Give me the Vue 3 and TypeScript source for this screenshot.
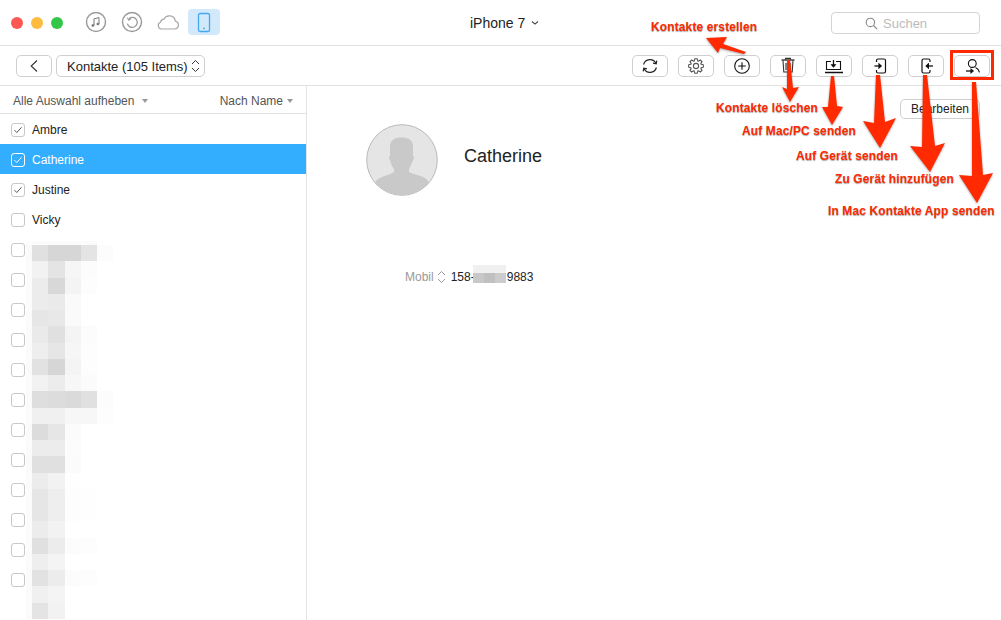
<script setup lang="ts">
const contacts = [
  { name: 'Ambre', checked: true },
  { name: 'Catherine', checked: true, selected: true },
  { name: 'Justine', checked: true },
  { name: 'Vicky', checked: false },
  ...Array.from({ length: 12 }, () => ({ name: '', checked: false })),
]

const shades: number[][] = [
  [0xfd, 0xfb, 0xfb, 0xfb, 0xfb, 0xff],
  [0xfa, 0xe0, 0xd6, 0xd6, 0xe4, 0xfc],
  [0xfb, 0xf2, 0xe4, 0xf6, 0xfc, 0xff],
  [0xfb, 0xec, 0xd8, 0xf4, 0xfd, 0xff],
  [0xfb, 0xec, 0xea, 0xfa, 0xff, 0xff],
  [0xfb, 0xe6, 0xe8, 0xfa, 0xff, 0xff],
  [0xfb, 0xea, 0xe0, 0xf4, 0xfc, 0xff],
  [0xfb, 0xee, 0xe6, 0xf6, 0xfd, 0xff],
  [0xfa, 0xe2, 0xd6, 0xf4, 0xfd, 0xff],
  [0xfb, 0xf2, 0xec, 0xf7, 0xfb, 0xff],
  [0xfa, 0xde, 0xdc, 0xda, 0xe0, 0xfc],
  [0xfb, 0xf0, 0xf0, 0xf7, 0xf7, 0xfd],
  [0xfa, 0xdc, 0xe6, 0xfb, 0xff, 0xff],
  [0xfb, 0xec, 0xec, 0xfc, 0xff, 0xff],
  [0xfa, 0xe0, 0xe0, 0xfb, 0xff, 0xff],
  [0xfb, 0xec, 0xf2, 0xfe, 0xff, 0xff],
  [0xfb, 0xe6, 0xee, 0xfd, 0xfe, 0xff],
  [0xfb, 0xe6, 0xee, 0xfd, 0xfe, 0xff],
  [0xfb, 0xec, 0xf2, 0xff, 0xff, 0xff],
  [0xfb, 0xe0, 0xec, 0xfc, 0xfd, 0xff],
  [0xfb, 0xee, 0xf4, 0xff, 0xff, 0xff],
  [0xfb, 0xe2, 0xec, 0xfc, 0xfd, 0xff],
  [0xfb, 0xf0, 0xf4, 0xff, 0xff, 0xff],
  [0xfb, 0xe4, 0xf2, 0xff, 0xff, 0xff],
]
const gray = (v: number) => `rgb(${v},${v},${v})`
const cells = shades.flat().map(gray)
const phoneCells = [0xf0, 0xf0, 0xf0, 0xc8, 0xc0, 0xcc].map(gray)

const gearPath = (() => {
  const pts: string[] = []
  const teeth = 8
  for (let i = 0; i < teeth; i++) {
    const a = (i / teeth) * Math.PI * 2
    const step = (Math.PI * 2) / teeth
    const list: [number, number][] = [
      [5.4, a - step * 0.42],
      [7.4, a - step * 0.2],
      [7.4, a + step * 0.2],
      [5.4, a + step * 0.42],
    ]
    for (const [r, t] of list) {
      pts.push(`${(11 + r * Math.cos(t)).toFixed(2)} ${(11 + r * Math.sin(t)).toFixed(2)}`)
    }
  }
  return 'M' + pts.join('L') + 'Z'
})()

const notes = [
  { cls: 'n1', text: 'Kontakte erstellen' },
  { cls: 'n2', text: 'Kontakte löschen' },
  { cls: 'n3', text: 'Auf Mac/PC senden' },
  { cls: 'n4', text: 'Auf Gerät senden' },
  { cls: 'n5', text: 'Zu Gerät hinzufügen' },
  { cls: 'n6', text: 'In Mac Kontakte App senden' },
]
const arrows = [
  '706,38 727,37 723,44 746,52 744,54 720,48 718,53',
  '787,60 790,60 793,88 799,87 790,102 782,87 787,89',
  '831,76 834,76 837,106 843,107 832,125 822,107 828,107',
  '876,75 880,75 885,122 896,118 880,148 863,121 874,123',
  '923,75 927,75 935,146 945,143 930,172 910,146 922,147',
  '972,82 976,82 983,175 993,173 977,203 959,175 972,176',
]
</script>

<template>
  <div class="window">
    <header class="titlebar">
      <div class="lights">
        <span class="light red"></span>
        <span class="light yellow"></span>
        <span class="light green"></span>
      </div>
      <nav class="nav">
        <span class="nav-item">
          <svg width="22" height="22" viewBox="0 0 22 22" fill="none" stroke="#999">
            <circle cx="11" cy="11" r="9.5" stroke-width="1.4" />
            <path d="M9 14.2V7.8l5-1.2v6.2" stroke="#777" stroke-width="1" />
            <ellipse cx="7.9" cy="14.4" rx="1.2" ry="1" fill="#777" stroke="#777" stroke-width=".6" />
            <ellipse cx="12.9" cy="13" rx="1.2" ry="1" fill="#777" stroke="#777" stroke-width=".6" />
          </svg>
        </span>
        <span class="nav-item">
          <svg width="22" height="22" viewBox="0 0 22 22" fill="none" stroke="#999">
            <circle cx="11" cy="11" r="9.5" stroke-width="1.4" />
            <path d="M8 7.6a5 5 0 1 1-1.6 5" stroke-width="1.3" />
            <path d="M6.4 6.8l1.5 2.4 2.2-1.6" stroke-width="1.2" />
          </svg>
        </span>
        <span class="nav-item">
          <svg width="24" height="18" viewBox="0 0 24 18" fill="none" stroke="#a8a8a8" stroke-width="1.2">
            <path d="M6 16h12.5a4 4 0 0 0 .8-7.9 6 6 0 0 0-11.300-2 4 4 0 0 0-3.600 3.200A3.500 3.500 0 0 0 6 16z" />
          </svg>
        </span>
        <span class="nav-tile">
          <svg width="14" height="22" viewBox="0 0 14 22" fill="none" stroke="#45a9f0" stroke-width="1.3">
            <rect x="1.5" y="2.5" width="11" height="18" rx="1.6" />
            <circle cx="7" cy="17.3" r="0.9" fill="#45a9f0" stroke="none" />
          </svg>
        </span>
      </nav>
      <div class="device">
        <span>iPhone 7</span>
        <svg width="8" height="6" viewBox="0 0 8 6" fill="none" stroke="#444" stroke-width="1.1"><path d="M1 1.5l3 2.6 3-2.6" /></svg>
      </div>
      <div class="search">
        <svg width="13" height="13" viewBox="0 0 13 13" fill="none" stroke="#888" stroke-width="1.1">
          <circle cx="5.4" cy="5.4" r="4.2" /><path d="M8.5 8.5l3.6 3.6" />
        </svg>
        <span>Suchen</span>
      </div>
    </header>

    <div class="toolbar">
      <button class="btn back">
        <svg width="10" height="14" viewBox="0 0 10 14" fill="none" stroke="#333" stroke-width="1.1"><path d="M8 1.5L2.2 7 8 12.5" /></svg>
      </button>
      <button class="btn picker">
        <span>Kontakte (105 Items)</span>
        <svg width="9" height="14" viewBox="0 0 9 14" fill="none" stroke="#333" stroke-width="1"><path d="M1 5l3.5-3.500L8 5M1 9l3.500 3.500L8 9" /></svg>
      </button>
      <div class="actions">
        <button class="btn tool">
          <svg width="22" height="22" viewBox="0 0 22 22" fill="none" stroke="#222" stroke-width="1.2">
            <path d="M4.6 9.5A6.6 6.6 0 0 1 17 8.5" /><path d="M17.4 12.5A6.6 6.6 0 0 1 5 13.5" />
            <path d="M17.8 5.6l-.6 3.3-3.2-.7" /><path d="M4.2 16.4l.6-3.3 3.2.7" />
          </svg>
        </button>
        <button class="btn tool">
          <svg width="22" height="22" viewBox="0 0 22 22" fill="none" stroke="#555" stroke-width="1.1">
            <path :d="gearPath" stroke-linejoin="round" /><circle cx="11" cy="11" r="2.6" />
          </svg>
        </button>
        <button class="btn tool">
          <svg width="22" height="22" viewBox="0 0 22 22" fill="none" stroke="#111" stroke-width="1.1">
            <circle cx="11" cy="11" r="7.3" /><path d="M11 7.2v7.6M7.2 11h7.6" />
          </svg>
        </button>
        <button class="btn tool">
          <svg width="22" height="22" viewBox="0 0 22 22" fill="none" stroke="#333" stroke-width="1.1">
            <path d="M4.5 5h13" stroke-width="1.4" /><path d="M8.5 4.6V3.4h5v1.2" />
            <path d="M6 5.5l.8 11.500h8.400L16 5.500" /><path d="M9 8v7M11 8v7M13 8v7" />
          </svg>
        </button>
        <button class="btn tool">
          <svg width="22" height="22" viewBox="0 0 22 22" fill="none" stroke="#111" stroke-width="1.1">
            <path d="M8 6.5H3.5v8h14v-8H13" /><path d="M2 17.5h18" stroke-width="1.5" />
            <path d="M10.5 5v6.5" stroke-width="1.3" /><path d="M8.7 9.8l1.8 2.2 1.8-2.2z" fill="#111" />
          </svg>
        </button>
        <button class="btn tool">
          <svg width="22" height="22" viewBox="0 0 22 22" fill="none" stroke="#111" stroke-width="1.2">
            <path d="M7.5 7V5.5a1.5 1.5 0 0 1 1.5-1.5h6a1.5 1.5 0 0 1 1.5 1.5v11a1.5 1.5 0 0 1-1.5 1.5H9a1.5 1.5 0 0 1-1.5-1.5V15" />
            <path d="M5.5 11h6" stroke-width="1.3" /><path d="M10 9l2.2 2-2.2 2z" fill="#111" />
          </svg>
        </button>
        <button class="btn tool">
          <svg width="22" height="22" viewBox="0 0 22 22" fill="none" stroke="#111" stroke-width="1.2">
            <path d="M15 7V5.5A1.5 1.5 0 0 0 13.5 4h-5A1.5 1.5 0 0 0 7 5.5v11A1.5 1.5 0 0 0 8.5 18h5a1.5 1.5 0 0 0 1.5-1.5V15" />
            <path d="M18 11h-6" stroke-width="1.3" /><path d="M13.4 9l-2.2 2 2.200 2z" fill="#111" />
          </svg>
        </button>
        <button class="btn tool">
          <svg width="22" height="22" viewBox="0 0 22 22" fill="none" stroke="#111" stroke-width="1.1">
            <circle cx="11.3" cy="8.5" r="3.9" />
            <path d="M14.5 12.5c2 .8 3.400 2.400 4 4.800" />
            <path d="M5 16h6" stroke-width="1.3" /><path d="M10 14.2l2.200 1.800-2.200 1.800z" fill="#111" />
          </svg>
        </button>
      </div>
    </div>

    <main class="main">
      <aside class="sidebar">
        <div class="list-head">
          <span class="head-item">Alle Auswahl aufheben<i class="caret wide"></i></span>
          <span class="head-item">Nach Name<i class="caret"></i></span>
        </div>
        <div class="list">
          <div v-for="(c, i) in contacts" :key="i" class="row" :class="{ selected: c.selected }">
            <span class="box">
              <svg v-if="c.checked" width="12" height="12" viewBox="0 0 12 12" fill="none" stroke="currentColor" stroke-width="1"><path d="M2.5 6.2l2.3 2.3 4.7-5.2" /></svg>
            </span>
            <span>{{ c.name }}</span>
          </div>
          <div class="mosaic">
            <i v-for="(color, i) in cells" :key="i" :style="{ background: color }"></i>
          </div>
        </div>
      </aside>

      <section class="detail">
        <div class="edit-row"><button class="btn edit">Bearbeiten</button></div>
        <div class="contact">
          <svg class="avatar" width="72" height="72" viewBox="0 0 72 72">
            <defs><clipPath id="avatar-clip"><circle cx="36" cy="36" r="35" /></clipPath></defs>
            <circle cx="36" cy="36" r="35.3" fill="#e5e5e5" stroke="#b9b9b9" stroke-width="1" />
            <path clip-path="url(#avatar-clip)" fill="#c9c9c9" d="M24 22c0-6 5-8.500 11.500-8.500S47 16 47 22v10c1.500 0 1 4-.5 5-1 4-3 6.500-3.500 8v3c3 2 10 3 14 5 3 1.500 5 3.500 7 7v12H8V60c2-4 5-6 9-7.500 5-1.500 10-3 11-5v-2.500c-1-1.500-3-4-3.500-8-1.500-1-2-5-.5-5z" />
          </svg>
          <div class="name">Catherine</div>
        </div>
        <div class="phone">
          <span class="label">Mobil</span>
          <svg width="9" height="14" viewBox="0 0 9 14" fill="none" stroke="#999" stroke-width="1"><path d="M1 5l3.500-3.500L8 5M1 9l3.500 3.500L8 9" /></svg>
          <span class="number">158-</span>
          <span class="phone-mosaic"><i v-for="(color, i) in phoneCells" :key="i" :style="{ background: color }"></i></span>
          <span class="number">9883</span>
        </div>
      </section>
    </main>

    <div class="highlight"></div>
    <svg class="arrows" width="1001" height="620" viewBox="0 0 1001 620">
      <polygon v-for="(p, i) in arrows" :key="i" :points="p" fill="#ff2a00" />
    </svg>
    <span v-for="n in notes" :key="n.cls" class="note" :class="n.cls">{{ n.text }}</span>
  </div>
</template>

<style>
html, body { margin: 0; background: #fff; }
</style>

<style scoped>
.window {
  position: relative;
  width: 1001px;
  height: 620px;
  overflow: hidden;
  display: flex;
  flex-direction: column;
  background: #fff;
  font-family: "Liberation Sans", Arial, sans-serif;
  color: #222;
}
.titlebar {
  flex: none;
  box-sizing: border-box;
  height: 46px;
  border-bottom: 1px solid #e2e2e2;
  display: flex;
  align-items: center;
  padding: 0 21px 0 11px;
}
.lights { display: flex; gap: 8px; margin-top: 1px; }
.light { width: 12px; height: 12px; border-radius: 50%; }
.red { background: #fc5753; }
.yellow { background: #fdbc40; }
.green { background: #33c748; }
.nav { display: flex; align-items: center; margin: -1px 0 0 15px; }
.nav-item { width: 36px; height: 26px; display: flex; align-items: center; justify-content: center; }
.nav-tile {
  width: 32px; height: 26px; margin-left: 2px; border-radius: 4px; background: #d2e8fb;
  display: flex; align-items: center; justify-content: center;
}
.device { margin-left: 250px; display: flex; align-items: center; gap: 6px; font-size: 14px; color: #222; }
.search {
  margin: 1px 0 0 auto;
  box-sizing: border-box;
  width: 149px; height: 22px;
  padding-left: 33px;
  border: 1px solid #d4d4d4; border-radius: 4px;
  display: flex; align-items: center; gap: 5px;
  font-size: 13px; color: #bbb;
}
.toolbar {
  flex: none;
  box-sizing: border-box;
  height: 40px;
  border-bottom: 1px solid #e2e2e2;
  display: flex;
  align-items: center;
  padding: 1px 11px 0 16px;
}
.btn {
  box-sizing: border-box;
  margin: 0; padding: 0;
  height: 22px;
  background: #fff;
  border: 1px solid #cfcfcf;
  border-radius: 5px;
  display: flex; align-items: center; justify-content: center;
  font-family: inherit; color: #222;
}
.back { width: 36px; }
.picker { width: 149px; margin-left: 4px; font-size: 13px; gap: 3px; justify-content: flex-start; padding-left: 10px; }
.actions { margin-left: auto; display: flex; gap: 10px; }
.tool { width: 36px; }
.main { flex: 1; min-height: 0; display: flex; }
.sidebar { flex: none; width: 306px; border-right: 1px solid #e4e4e4; display: flex; flex-direction: column; }
.list-head {
  flex: none; box-sizing: border-box; height: 28px; border-bottom: 1px solid #e2e2e2;
  display: flex; align-items: center; justify-content: space-between;
  padding: 2px 13px 0 13px; font-size: 12px; color: #555;
}
.head-item { display: flex; align-items: center; }
.caret { width: 0; height: 0; margin-left: 4px; border: 3px solid transparent; border-top: 4px solid #999; border-bottom: 0; }
.caret.wide { margin-left: 8px; }
.list { position: relative; flex: 1; overflow: hidden; }
.row { box-sizing: border-box; height: 30px; padding: 1px 0 0 11px; display: flex; align-items: center; gap: 7px; font-size: 12px; color: #222; }
.row.selected { background: #33aeff; color: #fff; }
.box {
  box-sizing: border-box; width: 14px; height: 14px; flex: none;
  border: 1px solid #c8c8c8; border-radius: 3px; background: #fff;
  display: flex; align-items: center; justify-content: center; color: #555;
}
.selected .box { background: transparent; border-color: #fff; color: #fff; }
.mosaic {
  position: absolute; left: 26px; top: 127px;
  display: grid;
  grid-template-columns: 6px repeat(5, 16.25px);
  grid-template-rows: 4px;
  grid-auto-rows: 16.25px;
}
.detail { flex: 1; min-width: 0; }
.edit-row { display: flex; justify-content: flex-end; padding: 13px 21px 0 0; }
.edit { width: 80px; height: 20px; font-size: 12px; }
.contact { display: flex; align-items: center; margin: 5px 0 0 59px; }
.avatar { flex: none; }
.name { margin: 0 0 8px 26px; font-size: 18px; color: #222; }
.phone { display: flex; align-items: center; height: 22px; margin: 70px 0 0 98px; font-size: 12px; }
.label { color: #999; margin-right: 3px; }
.number { color: #222; }
.phone svg { margin-right: 5px; }
.phone-mosaic { display: grid; grid-template-columns: repeat(3, 11px); grid-template-rows: 8px 10px; margin: -6px 1px 0 -2px; }
.highlight {
  position: absolute; left: 950px; top: 50px; width: 44px; height: 30px;
  box-sizing: border-box; border: 3px solid #ff2a00;
}
.arrows { position: absolute; left: 0; top: 0; filter: drop-shadow(0 1px 1px rgba(0,0,0,.35)); pointer-events: none; }
.note {
  position: absolute; white-space: nowrap; font-size: 12px; line-height: 14px; font-weight: bold; letter-spacing: .12px;
  color: #ff2a00; text-shadow: 0 1px 1px rgba(0,0,0,.35);
}
.n1 { left: 651px; top: 20px; }
.n2 { left: 716px; top: 101px; }
.n3 { left: 742px; top: 124px; }
.n4 { left: 796px; top: 149px; }
.n5 { left: 835px; top: 172px; }
.n6 { left: 828px; top: 204px; }
</style>
